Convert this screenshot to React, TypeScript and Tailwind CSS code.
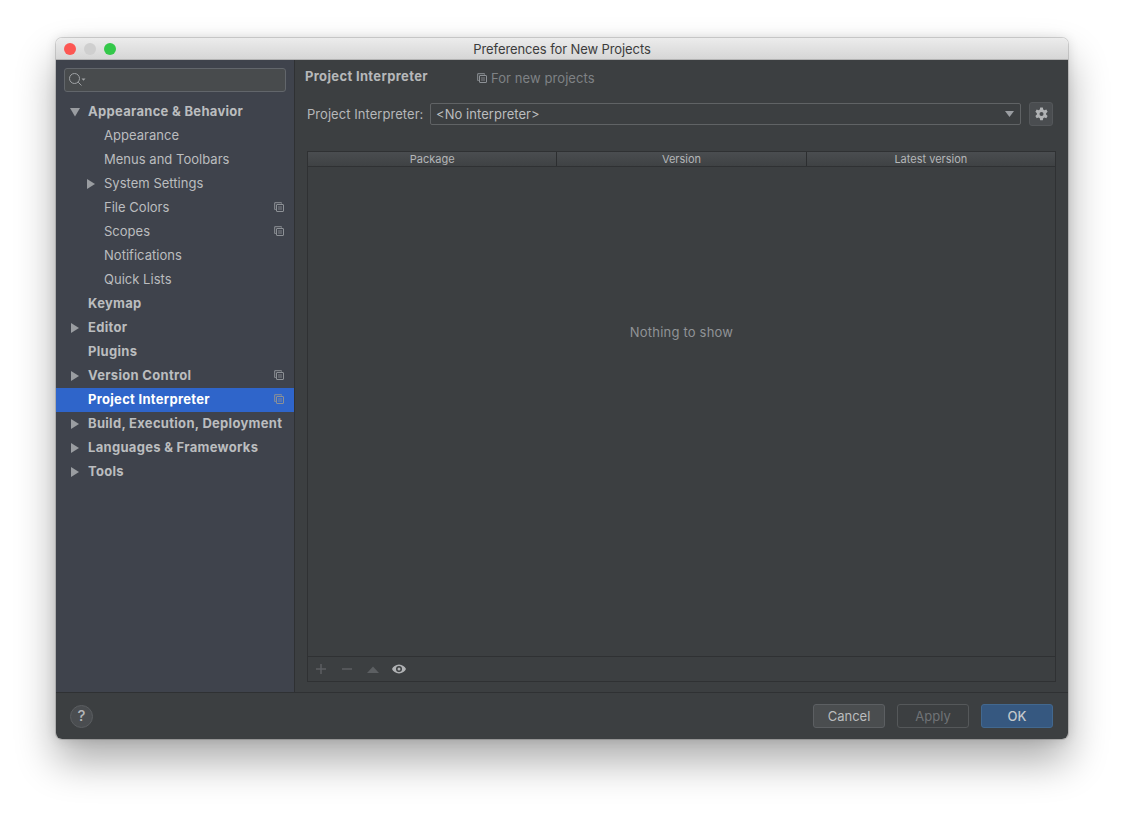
import type { ReactNode } from "react";

const FONT = "font-['Inter','Liberation_Sans',sans-serif]";

// ─── Icons ───────────────────────────────────────────────────────────────────

function Copy({ className = "text-[#8d9196]" }: { className?: string }) {
  return (
    <svg width="10" height="10" viewBox="0 0 10 10" fill="none" stroke="currentColor" strokeWidth="1" className={className}>
      <path d="M7.5 1.5V.7H.7v6.8h1" />
      <rect x="2.5" y="2.5" width="7" height="7" rx="0.5" />
      <path d="M4 5h4M4 7h4" strokeWidth="0.8" />
    </svg>
  );
}

function Arrow({ down = false }: { down?: boolean }) {
  return (
    <svg width="10" height="10" viewBox="0 0 10 10" fill="#9a9da1">
      {down ? <path d="M0 1h10L5 9.5z" /> : <path d="M1 0l8 5-8 5z" />}
    </svg>
  );
}

// ─── Sidebar ─────────────────────────────────────────────────────────────────

type Row = {
  label: string;
  indent?: boolean;
  bold?: boolean;
  arrow?: "right" | "down";
  copy?: boolean;
  active?: boolean;
};

const rows: Row[] = [
  { label: "Appearance & Behavior", bold: true, arrow: "down" },
  { label: "Appearance", indent: true },
  { label: "Menus and Toolbars", indent: true },
  { label: "System Settings", indent: true, arrow: "right" },
  { label: "File Colors", indent: true, copy: true },
  { label: "Scopes", indent: true, copy: true },
  { label: "Notifications", indent: true },
  { label: "Quick Lists", indent: true },
  { label: "Keymap", bold: true },
  { label: "Editor", bold: true, arrow: "right" },
  { label: "Plugins", bold: true },
  { label: "Version Control", bold: true, arrow: "right", copy: true },
  { label: "Project Interpreter", bold: true, copy: true, active: true },
  { label: "Build, Execution, Deployment", bold: true, arrow: "right" },
  { label: "Languages & Frameworks", bold: true, arrow: "right" },
  { label: "Tools", bold: true, arrow: "right" },
];

function SidebarRow({ row }: { row: Row }) {
  return (
    <div className={`relative flex h-6 items-center ${row.indent ? "pl-12" : "pl-8"} ${row.active ? "bg-[#2f65ca] text-white" : "text-[#bbbdbf]"}`}>
      {row.arrow && (
        <span className={`absolute top-[7px] flex ${row.indent ? "left-[30px]" : "left-[14px]"}`}>
          <Arrow down={row.arrow === "down"} />
        </span>
      )}
      <span className={`text-[13px] ${row.bold ? "font-bold tracking-[0.3px]" : "font-normal tracking-[0.02px]"}`}>{row.label}</span>
      {row.copy && (
        <span className="absolute right-[10px] top-[6px] flex">
          <Copy />
        </span>
      )}
    </div>
  );
}

function Sidebar() {
  return (
    <aside className="flex w-[238px] shrink-0 flex-col bg-[#3f434c]">
      <div className="mx-2 mt-2 flex h-6 items-center rounded-[3px] border border-[#62666b] bg-[#484b4d] pl-[3px]">
        <svg width="18" height="16" viewBox="0 0 18 16" fill="none" stroke="#a0a3a6" strokeWidth="1">
          <circle cx="6.500" cy="6.500" r="5" />
          <path d="M10.200 10.200L13.500 13.500" />
          <path d="M13.500 6.500h4l-2 2.200z" fill="#a0a3a6" stroke="none" />
        </svg>
      </div>
      <div className="mt-2 flex flex-col">
        {rows.map((row) => (
          <SidebarRow key={row.label} row={row} />
        ))}
      </div>
    </aside>
  );
}

// ─── Main panel ──────────────────────────────────────────────────────────────

function HeaderCell({ children, last = false }: { children: ReactNode; last?: boolean }) {
  return (
    <div className={`flex flex-1 items-center justify-center text-[11px] text-[#b4b6b8] ${last ? "" : "border-r border-[#2c2e30]"}`}>
      {children}
    </div>
  );
}

function Main() {
  return (
    <main className="flex min-w-0 flex-1 flex-col border-l border-[#2f3133] bg-[#3c3f41] pr-[12px]">
      <div className="flex h-[43px] items-start pl-[10px] pt-[8px]">
        <span className="w-[172px] text-[13px] font-bold leading-4 tracking-[0.35px] text-[#b6b8ba]">Project Interpreter</span>
        <span className="flex items-center gap-1 pt-[2px] text-[13px] leading-4 tracking-[0.08px] text-[#7f8285]">
          <Copy className="text-[#8d9196]" />
          For new projects
        </span>
      </div>
      <div className="flex h-[22px] items-center pl-3">
        <span className="w-[123px] pt-[2px] text-[13px] tracking-[0.05px] text-[#b6b8ba]">Project Interpreter:</span>
        <div className="flex h-[22px] w-[591px] items-center justify-between rounded-[2px] border border-[#606365] pl-[5px] pr-[6px] text-[13px] tracking-[0.05px] text-[#bbbdbf]">
          <span className="pt-[2px]">&lt;No interpreter&gt;</span>
          <svg width="9" height="6" viewBox="0 0 9 6" fill="#9a9da1">
            <path d="M0 0h9L4.500 6z" />
          </svg>
        </div>
        <button className="ml-2 flex h-[24px] w-[24px] items-center justify-center rounded-[3px] border border-[#54575a] bg-[#4a4d50]">
          <svg width="15" height="15" viewBox="0 0 14 14" fill="#b0b2b4">
            <path
              fillRule="evenodd"
              d="M5.800.500h2.400l.4 1.900 1.100.6 1.800-.6 1.200 2.100-1.400 1.300v1.300l1.400 1.300-1.200 2.100-1.800-.6-1.100.6-.4 1.900H5.800l-.4-1.900-1.100-.6-1.800.6L1.300 8.300l1.400-1.300V5.800L1.300 4.500l1.200-2.100 1.800.6 1.100-.6zM7 4.700a1.900 1.900 0 100 3.800 1.900 1.900 0 000-3.800z"
            />
          </svg>
        </button>
      </div>

      <div className="ml-3 mt-[26px] flex h-[531px] w-[749px] flex-col border border-[#2f3133]">
        <div className="flex h-[15px] shrink-0 border-b border-[#2f3133] bg-gradient-to-b from-[#4a4d50] to-[#3f4244]">
          <HeaderCell>Package</HeaderCell>
          <HeaderCell>Version</HeaderCell>
          <HeaderCell last>Latest version</HeaderCell>
        </div>
        <div className="flex flex-1 items-center justify-center pb-[158px] text-[13px] tracking-[0.2px] text-[#909396]">Nothing to show</div>
        <div className="flex h-[25px] shrink-0 items-center gap-[10px] border-t border-[#2f3133] pl-[5px]">
          <svg width="16" height="16" viewBox="0 0 16 16" stroke="#5c5f62" strokeWidth="1.500">
            <path d="M8 3v10M3 8h10" />
          </svg>
          <svg width="16" height="16" viewBox="0 0 16 16" stroke="#5c5f62" strokeWidth="1.500">
            <path d="M3 8h10" />
          </svg>
          <svg width="16" height="16" viewBox="0 0 16 16" fill="#5c5f62">
            <path d="M2 12L8 5.500l6 6.500z" />
          </svg>
          <svg width="16" height="16" viewBox="0 0 16 16" fill="#b0b2b4">
            <path
              fillRule="evenodd"
              d="M8 3.500c3.300 0 6 2.200 7 4.500-1 2.300-3.700 4.500-7 4.500S2 10.300 1 8c1-2.300 3.700-4.500 7-4.500zM8 5a3 3 0 100 6 3 3 0 000-6zm0 1.500a1.500 1.500 0 110 3 1.500 1.500 0 010-3z"
            />
          </svg>
        </div>
      </div>
    </main>
  );
}

// ─── Footer ──────────────────────────────────────────────────────────────────

function Footer() {
  return (
    <footer className="flex h-[47px] shrink-0 items-center justify-between border-t border-[#2f3133] pl-[14px] pr-[15px]">
      <div className="flex h-[23px] w-[23px] items-center justify-center rounded-full border border-[#5a5d60] bg-[#4a4d50] text-[15px] font-medium text-[#b4b6b8]">
        ?
      </div>
      <div className="flex gap-3">
        <button className="h-[24px] w-[72px] rounded-[3px] border border-[#5c5f62] bg-[#4a4d4f] pt-px text-[13px] text-[#babcbe]">Cancel</button>
        <button className="h-[24px] w-[72px] rounded-[3px] border border-[#55585a] pt-px text-[13px] text-[#707376]">Apply</button>
        <button className="h-[24px] w-[72px] rounded-[3px] border border-[#42688f] bg-[#365880] pt-px text-[13px] font-medium text-[#c4c8cc]">OK</button>
      </div>
    </footer>
  );
}

// ─── Window ──────────────────────────────────────────────────────────────────

export default function App() {
  return (
    <div className={`h-[813px] w-[1124px] overflow-hidden bg-white pl-[56px] pt-[38px] ${FONT}`}>
      <div className="flex h-[701px] w-[1012px] flex-col overflow-hidden rounded-[6px] shadow-[0_22px_40px_rgba(0,0,0,0.33),0_0_0_1px_rgba(0,0,0,0.14),0_0_12px_rgba(0,0,0,0.12)]">
        <div className="relative flex h-[22px] shrink-0 items-center justify-center border-b border-[#b3b3b3] bg-gradient-to-b from-[#ececec] to-[#d6d6d6]">
          <div className="absolute left-[8px] top-[5px] flex gap-2">
            <span className="h-3 w-3 rounded-full bg-[#fc5753]" />
            <span className="h-3 w-3 rounded-full bg-[#cfcfcf]" />
            <span className="h-3 w-3 rounded-full bg-[#34c84a]" />
          </div>
          <span className="pt-[3px] text-[13px] tracking-[-0.1px] text-[#3c3c3c]">Preferences for New Projects</span>
        </div>
        <div className="flex min-h-0 flex-1 bg-[#3c3f41]">
          <Sidebar />
          <Main />
        </div>
        <div className="bg-[#3c3f41]">
          <Footer />
        </div>
      </div>
    </div>
  );
}
